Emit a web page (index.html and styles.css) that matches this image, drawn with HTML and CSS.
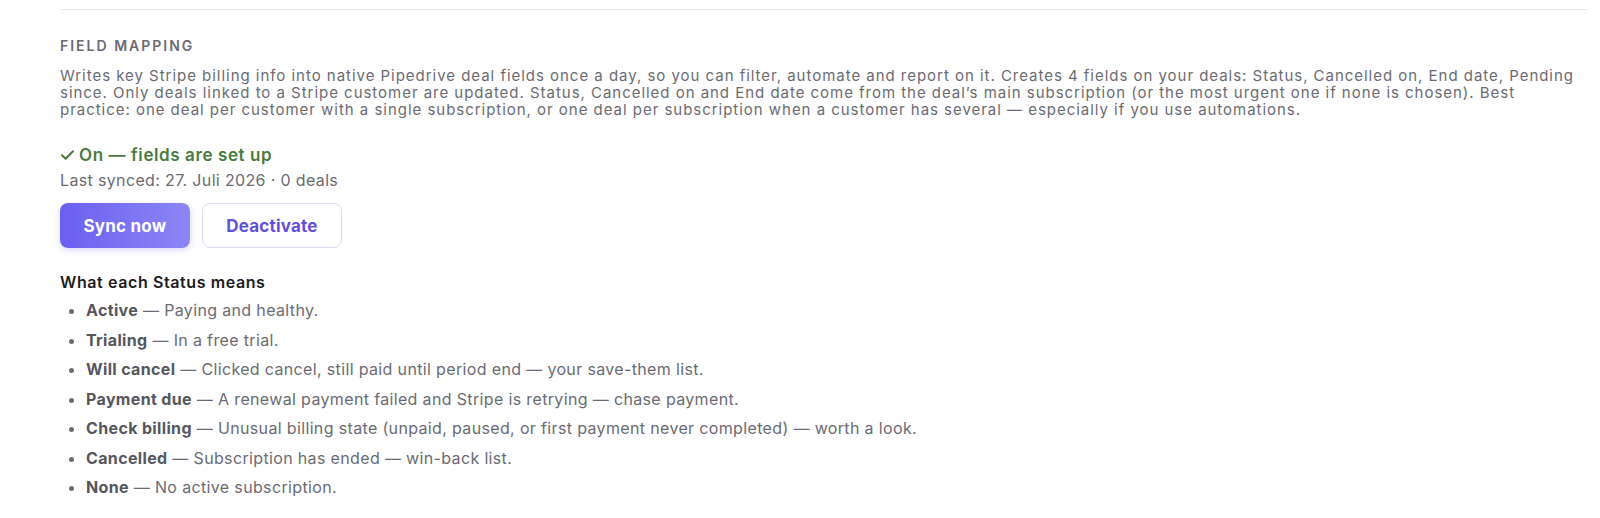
FILE: index.html
```html
<!DOCTYPE html>
<html lang="en">
<head>
  <meta charset="UTF-8">
  <meta name="viewport" content="width=device-width, initial-scale=1.0">
  <title>Field mapping</title>
  <link rel="stylesheet" href="styles.css">
</head>
<body>
  <section class="section">
    <h3 class="section-title">Field mapping</h3>
    <p class="description">
      Writes key Stripe billing info into native Pipedrive deal fields once a day, so you can filter, automate and report on it. Creates 4 fields on your deals: Status, Cancelled on, End date, Pending since. Only deals linked to a Stripe customer are updated. Status, Cancelled on and End date come from the deal’s main subscription (or the most urgent one if none is chosen). Best practice: one deal per customer with a single subscription, or one deal per subscription when a customer has several — especially if you use automations.
    </p>

    <div class="status-on">
      <svg class="check" width="13" height="10" viewBox="0 0 13 10" aria-hidden="true">
        <path d="M1 5.2 L4.6 8.8 L12 1.2" fill="none" stroke="currentColor" stroke-width="2" stroke-linecap="round" stroke-linejoin="round"/>
      </svg>
      <span>On — fields are set up</span>
    </div>
    <div class="last-synced">Last synced: 27. Juli 2026 · 0 deals</div>

    <div class="actions">
      <button class="btn btn-primary">Sync now</button>
      <button class="btn btn-secondary">Deactivate</button>
    </div>

    <h4 class="legend-title">What each Status means</h4>
    <ul class="legend">
      <li><strong>Active</strong> — Paying and healthy.</li>
      <li><strong>Trialing</strong> — In a free trial.</li>
      <li><strong>Will cancel</strong> — Clicked cancel, still paid until period end — your save-them list.</li>
      <li><strong>Payment due</strong> — A renewal payment failed and Stripe is retrying — chase payment.</li>
      <li><strong>Check billing</strong> — Unusual billing state (unpaid, paused, or first payment never completed) — worth a look.</li>
      <li><strong>Cancelled</strong> — Subscription has ended — win-back list.</li>
      <li><strong>None</strong> — No active subscription.</li>
    </ul>
  </section>
</body>
</html>
```

FILE: styles.css
```css
body {
  font-family: Inter, 'Liberation Sans', sans-serif;
  margin: 0;
  padding: 9px 12px 0 60px;
  color: #6b6b74;
  background: #fff;
}
.section {
  border-top: 1px solid #e9e9ed;
  padding-top: 27px;
}
.section-title {
  margin: 0 0 12px;
  font-size: 14px;
  font-weight: 600;
  letter-spacing: 2px;
  text-transform: uppercase;
  color: #6b6b74;
  line-height: 18px;
}
.description {
  max-width: 1515px;
  margin: 0 0 25px;
  font-size: 15px;
  letter-spacing: 0.97px;
  line-height: 17px;
  color: #6b6b74;
}
.status-on {
  display: flex;
  align-items: center;
  gap: 5px;
  font-size: 17px;
  font-weight: 600;
  letter-spacing: 0.6px;
  color: #4b7a3e;
  line-height: 24px;
}
.check {
  flex: none;
  margin-left: 1px;
}
.last-synced {
  font-size: 16px;
  letter-spacing: 0.35px;
  line-height: 26px;
  color: #6b6b74;
  margin-bottom: 10px;
}
.actions {
  display: flex;
  gap: 12px;
  margin-bottom: 23px;
}
.btn {
  font-family: inherit;
  font-size: 17px;
  font-weight: 700;
  letter-spacing: 0.2px;
  height: 45px;
  padding: 0 23.5px;
  border-radius: 8px;
  cursor: pointer;
}
.btn-primary {
  background: linear-gradient(90deg, #6a5ff0, #8c87f6);
  color: #fff;
  border: none;
  box-shadow: 0 2px 6px rgba(106, 95, 240, 0.25);
}
.btn-secondary {
  background: #fff;
  color: #6351da;
  border: 1.5px solid #dcd9f3;
}
.legend-title {
  margin: 0 0 3px;
  font-size: 16px;
  font-weight: 600;
  letter-spacing: 0.6px;
  color: #1c1c22;
  line-height: 22px;
}
.legend {
  margin: 0;
  padding-left: 26px;
  font-size: 16px;
  letter-spacing: 0.35px;
  line-height: 29.5px;
  color: #6b6b74;
}
.legend strong {
  color: #56565f;
  font-weight: 700;
}
```
